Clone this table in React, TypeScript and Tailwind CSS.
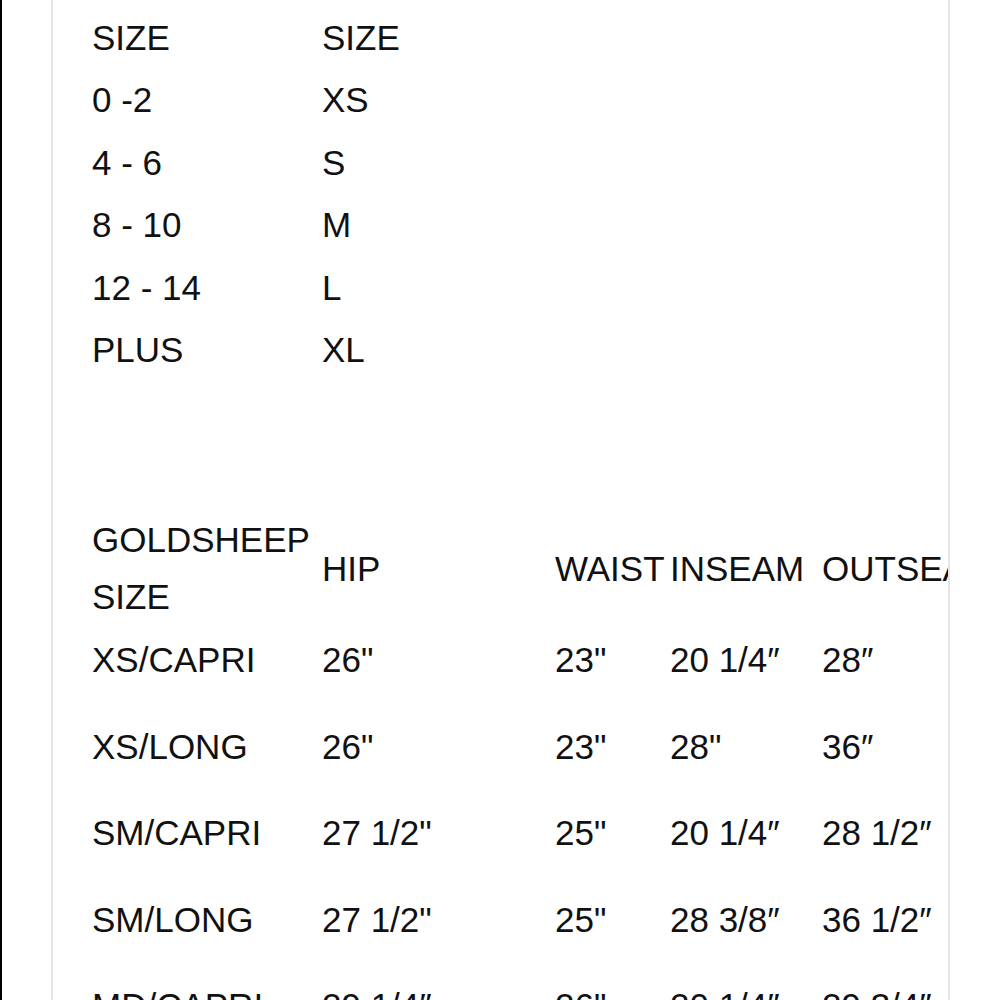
const sizeMap = [
  ["SIZE", "SIZE"],
  ["0 -2", "XS"],
  ["4 - 6", "S"],
  ["8 - 10", "M"],
  ["12 - 14", "L"],
  ["PLUS", "XL"],
];

const rows = [
  ["XS/CAPRI", '26"', '23"', "20 1/4″", "28″"],
  ["XS/LONG", '26"', '23"', '28"', "36″"],
  ["SM/CAPRI", '27 1/2"', '25"', "20 1/4″", "28 1/2″"],
  ["SM/LONG", '27 1/2"', '25"', "28 3/8″", "36 1/2″"],
  ["MD/CAPRI", "29 1/4″", '26"', "20 1/4″", "29 3/4″"],
];

const colW = ["w-[230px]", "w-[233px]", "w-[115px]", "w-[152px]", "w-[200px]"];

export default function App() {
  return (
    <div
      className="h-[1000px] overflow-hidden border-l-2 border-black bg-white text-[35px] text-[#111]"
      style={{ fontFamily: '"Liberation Sans", Arial, sans-serif' }}
    >
      <div className="ml-[49px] h-full w-[899px] overflow-hidden border-x-2 border-[#e6e6e6] pl-[39px]">
        {/* retail size -> letter size */}
        <div className="grid grid-cols-[230px_230px] pt-[6.5px] leading-[62.6px]">
          {sizeMap.map(([a, b], i) => (
            <div key={i} className="contents">
              <div className="whitespace-nowrap">{a}</div>
              <div className="whitespace-nowrap">{b}</div>
            </div>
          ))}
        </div>

        {/* measurements */}
        <div className="mt-[129.3px] w-[1000px]">
          <div className="flex h-[114px] items-center leading-[57px]">
            <div className={colW[0]}>GOLDSHEEP SIZE</div>
            <div className={colW[1]}>HIP</div>
            <div className={colW[2]}>WAIST</div>
            <div className={colW[3]}>INSEAM</div>
            <div className={`${colW[4]} whitespace-nowrap`}>OUTSEAM</div>
          </div>
          <div className="mt-[6px] flex flex-col gap-[29.5px] leading-[57px]">
            {rows.map((r) => (
              <div key={r[0]} className="flex">
                {r.map((c, j) => (
                  <div key={j} className={`${colW[j]} whitespace-nowrap`}>
                    {c}
                  </div>
                ))}
              </div>
            ))}
          </div>
        </div>
      </div>
    </div>
  );
}
